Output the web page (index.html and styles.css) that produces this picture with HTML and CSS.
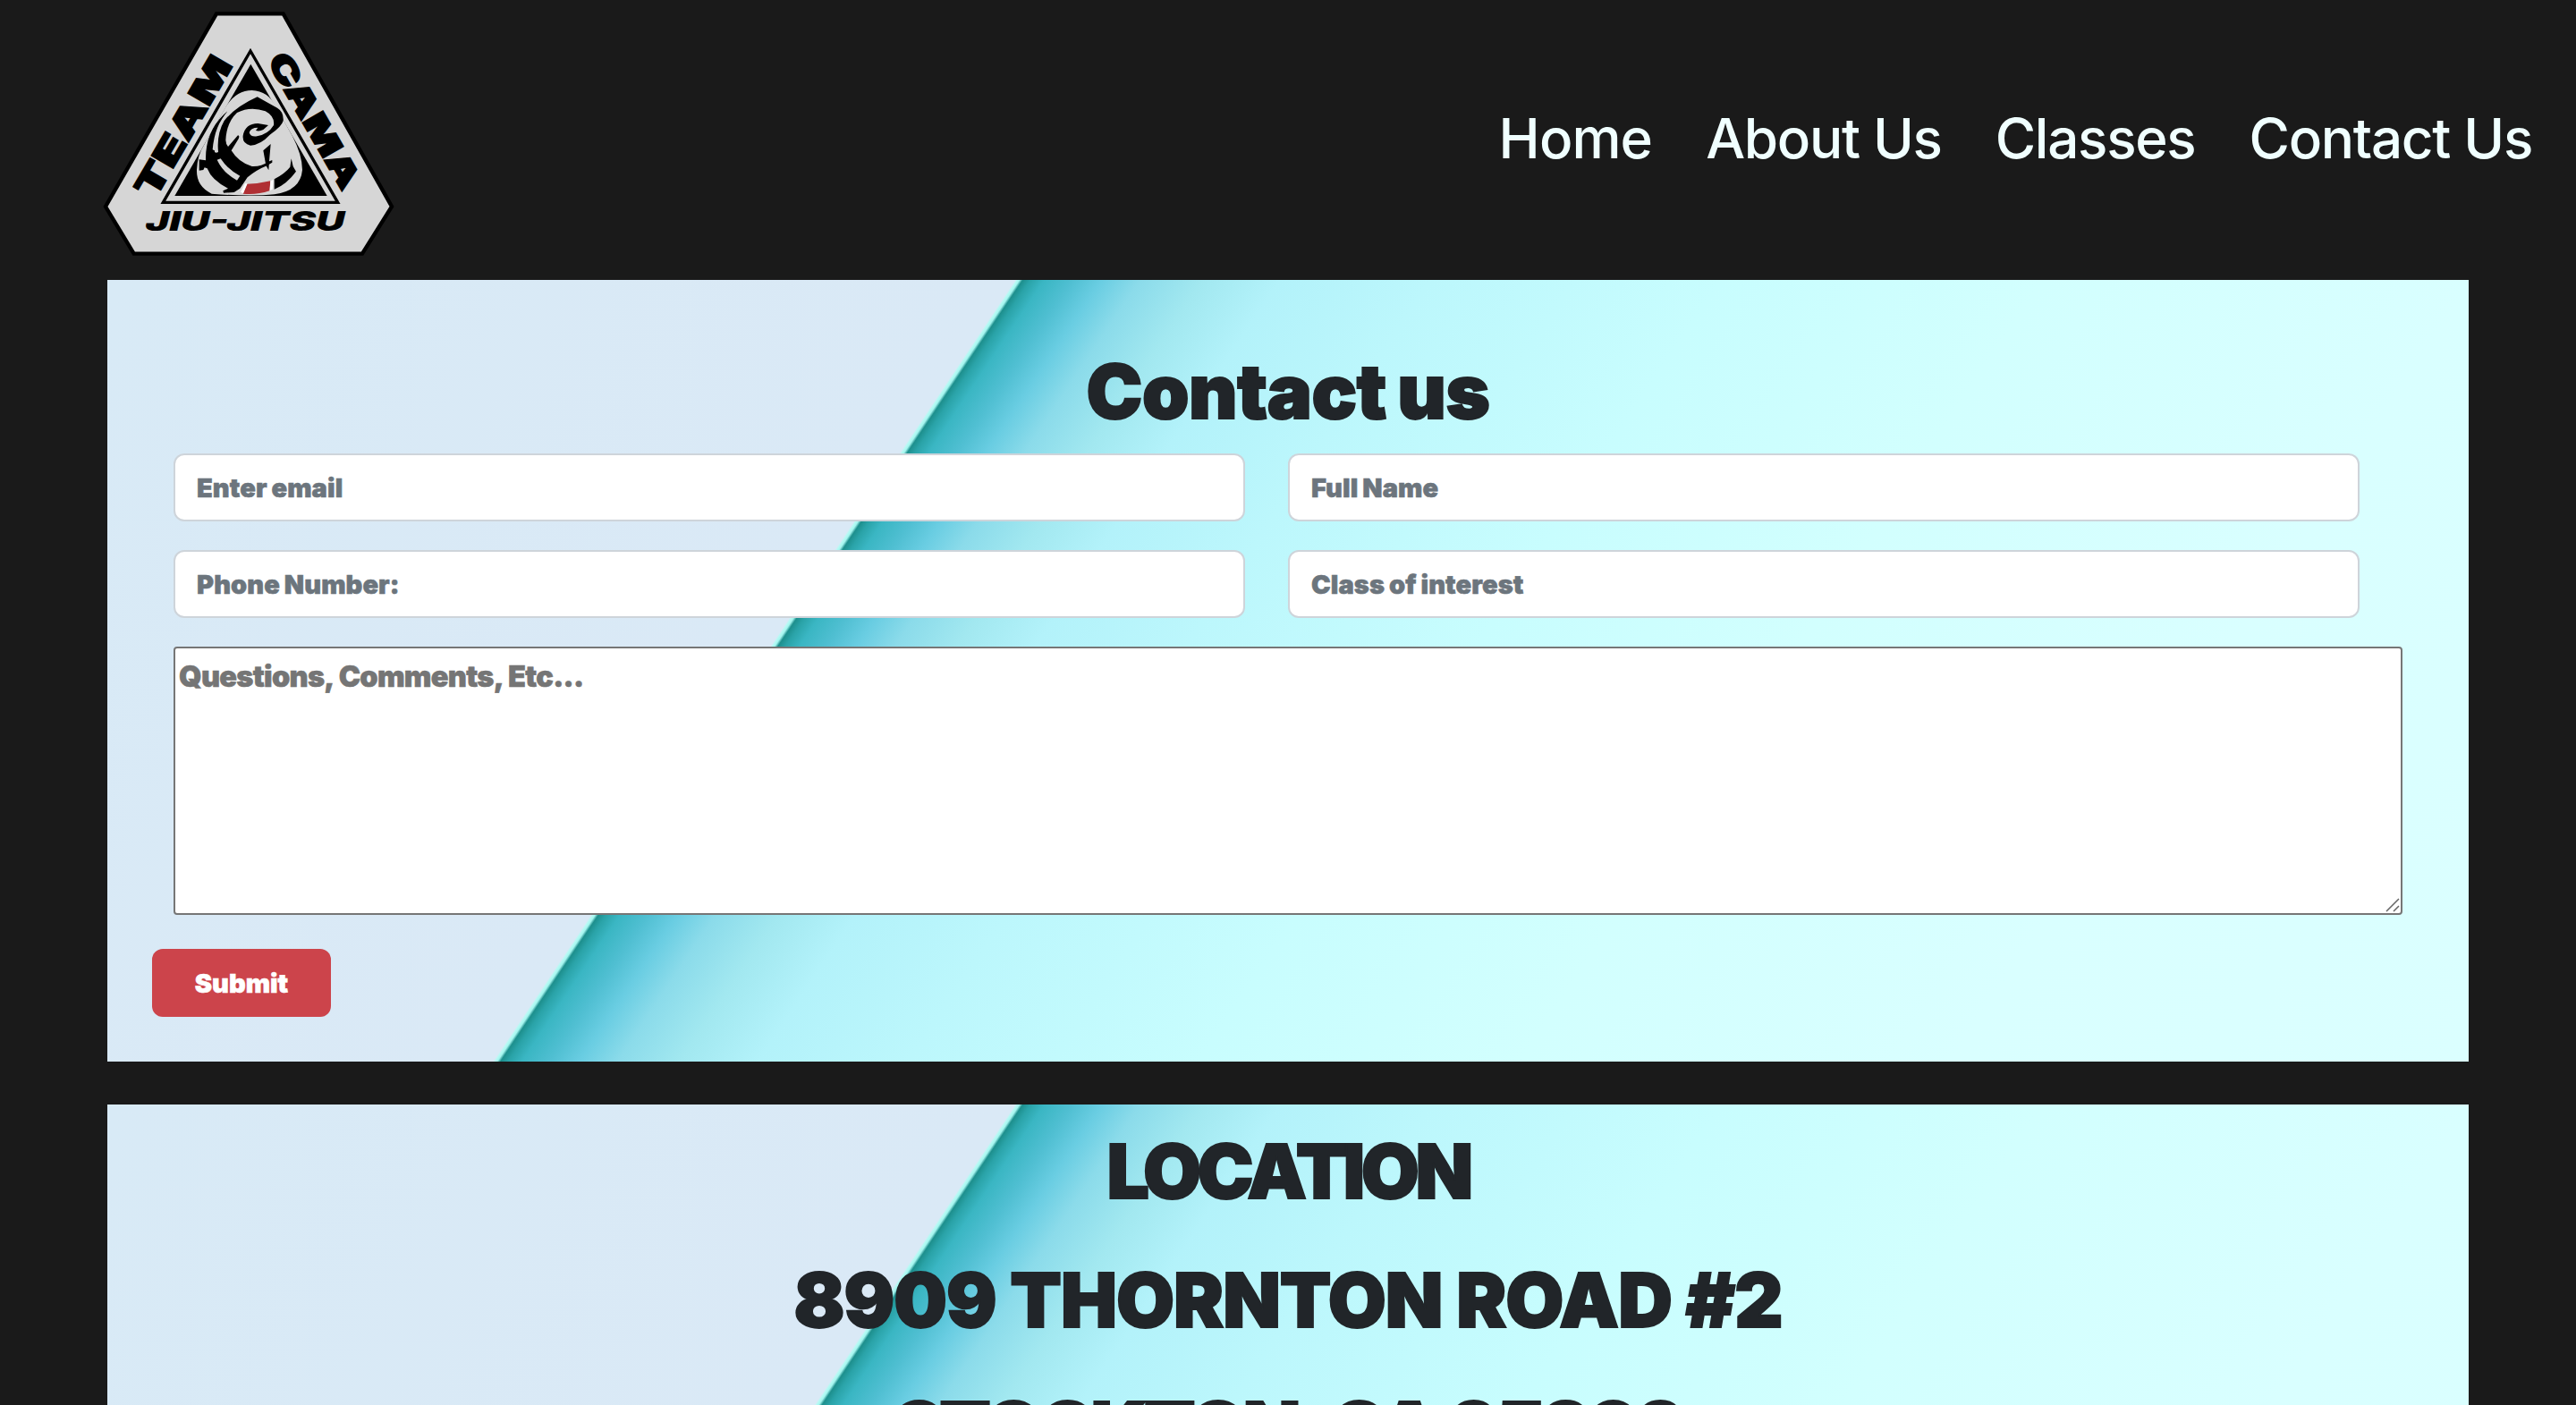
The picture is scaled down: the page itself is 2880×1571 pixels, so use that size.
FILE: index.html
```html
<!DOCTYPE html>
<html lang="en">
<head>
<meta charset="utf-8">
<title>Team Cama Jiu-Jitsu</title>
<link rel="stylesheet" href="styles.css">
</head>
<body>
<header class="site-header">
  <a class="logo" href="#">
    <svg viewBox="0 0 1080 930" role="img" aria-label="Team Cama Jiu-Jitsu">
      <path class="plate" d="M426 46H650L1014 693L915 851H149L54 693Z"/>
      <path class="frame" d="M540 171L833 679H247Z"/>
      <path d="M541 215L797 657H286Z"/>
      <path class="grey" d="M455 362Q490 303 545 303Q600 305 625 358L680 455Q714 520 714 570Q708 640 620 652Q540 660 410 650Q358 625 360 570Q362 520 385 485Z"/>
      <g transform="translate(300 270)">
        <path d="M152 135Q190 88 263 55L330 92Q352 105 350 135Q345 155 305 182Q275 215 240 218Q212 212 215 185Q222 145 265 144L300 150L283 165Q270 172 258 168L265 158Q240 158 236 175Q240 190 262 187Q300 180 318 150Q322 120 290 103Q240 85 195 108Q160 140 157 200Q158 215 165 222L198 184Q205 185 200 196L176 235Q200 275 245 288Q275 290 300 272L313 267V275L295 286Q260 300 230 325L205 362L185 375L150 377L148 370L165 362Q110 335 95 295L86 292L82 300L68 302L68 265L90 268Q88 175 150 115L163 103Q120 160 120 240Q125 245 132 240Q126 180 152 135Z"/>
        <path class="grey" d="M163 106Q120 150 113 232L122 236Q120 170 163 106ZM128 266L140 262Q165 300 205 320L195 335Q150 312 128 266Z"/>
        <path d="M283 235L308 213L303 270L301 301L292 285ZM320 331Q358 310 373 290L377 262L383 288L393 305Q362 348 320 365Z"/>
        <path class="belt" d="M228 347Q270 346 307 337L304 370Q260 385 215 380Z"/>
        <path class="belt-edge" d="M222 346H230L216 379L207 374ZM307 337L317 333L314 365L305 369Z"/>
      </g>
      <text class="arc" transform="translate(218 672) rotate(-59.7)" font-size="116" textLength="525" lengthAdjust="spacingAndGlyphs">TEAM</text>
      <text class="arc" transform="translate(594 203) rotate(60)" font-size="108" textLength="508" lengthAdjust="spacingAndGlyphs">CAMA</text>
      <text class="base" x="188" y="775" font-size="90" textLength="668" lengthAdjust="spacingAndGlyphs">JIU-JITSU</text>
    </svg>
  </a>
  <nav class="nav">
    <a class="nav-home" href="#">Home</a>
    <a href="#">About Us</a>
    <a href="#">Classes</a>
    <a href="#">Contact Us</a>
  </nav>
</header>
<main>
  <section class="panel contact">
    <h1>Contact us</h1>
    <form>
      <div class="fields">
        <input class="field" type="email" placeholder="Enter email">
        <input class="field" type="text" placeholder="Full Name">
        <input class="field" type="tel" placeholder="Phone Number:">
        <input class="field" type="text" placeholder="Class of interest">
      </div>
      <div class="message">
        <textarea placeholder="Questions, Comments, Etc..."></textarea>
        <svg class="grip" viewBox="0 0 16 16"><path d="M1 15L15 1M9 15L15 9"/></svg>
      </div>
      <button class="submit" type="button">Submit</button>
    </form>
  </section>
  <section class="panel location">
    <h1 class="tight">LOCATION</h1>
    <h1 class="street">8909 THORNTON ROAD #2</h1>
    <h1 class="tight">STOCKTON, CA 95209</h1>
  </section>
</main>
</body>
</html>
```
FILE: styles.css
```css
* { box-sizing: border-box; }

body {
  margin: 0;
  height: 1571px;
  overflow: hidden;
  background: #1a1a1a;
  color: #212529;
  font-family: Inter, "Liberation Sans", sans-serif;
}

.site-header {
  display: flex;
  align-items: center;
  justify-content: space-between;
  height: 309px;
  margin-bottom: 4px;
  padding: 0 49px 0 100px;
}

.logo { align-self: flex-start; }
.logo svg { display: block; width: 360px; height: 310px; }
.plate { fill: #d6d6d6; stroke: #000; stroke-width: 13; }
.frame { fill: none; stroke: #000; stroke-width: 10; }
.grey { fill: #d6d6d6; }
.belt { fill: #b03034; }
.belt-edge { fill: #fff; }
.arc { font-weight: 900; stroke: #000; stroke-width: 5; }
.base { font-weight: 900; font-style: italic; }

.nav { display: flex; gap: 60px; }
.nav a {
  color: azure;
  font-size: 62px;
  font-weight: 500;
  letter-spacing: -1.3px;
  text-decoration: none;
  white-space: nowrap;
}
.nav .nav-home { letter-spacing: -0.9px; }

.panel {
  width: 2640px;
  margin: 0 auto 48px;
  background: linear-gradient(123.75deg,
    #d8eaf6 0, #dae9f6 844px, #b4fbf4 846px, #a4f4ee 848px,
    #1d8f8d 851px, #2aa3a8 858px, #3ab6c3 871px, #50bfd2 897px,
    #69cde2 924px, #8bdbea 960px, #a2e8f0 1018px, #b3f2fa 1090px,
    #bcf7fc 1230px, #c8fdfe 1500px, #d2fffe 1800px, #d9ffff 2200px,
    #dbffff 2681px);
}

h1 {
  margin: 0;
  font-size: 84px;
  font-weight: 900;
  line-height: 115px;
  text-align: center;
  letter-spacing: -0.4px;
  word-spacing: -4px;
  -webkit-text-stroke: 2px currentColor;
}
.street { letter-spacing: -1px; word-spacing: 0; }
.tight { letter-spacing: -4.5px; word-spacing: 3px; }

.contact { height: 874px; padding: 67px 50px 0; }

.fields {
  display: grid;
  grid-template-columns: 1198px 1198px;
  gap: 32px 48px;
  margin: 12px 24px 32px;
}

.field {
  height: 76px;
  padding: 0 24px;
  border: 2px solid #ced4da;
  border-radius: 12px;
  background: #fff;
  font: 900 29px Inter, sans-serif;
  letter-spacing: 0.1px;
  word-spacing: -1px;
  -webkit-text-stroke: 0.6px #6c757d;
}
.field::placeholder { color: #6c757d; opacity: 1; }

.message { position: relative; height: 300px; margin: 0 24px 38px; }
.message textarea {
  display: block;
  width: 100%;
  height: 100%;
  padding: 5px 4px;
  border: 2px solid #767676;
  border-radius: 4px;
  background: #fff;
  font: 900 32.5px/54px Inter, sans-serif;
  letter-spacing: -0.7px;
  word-spacing: 1px;
  resize: none;
  -webkit-text-stroke: 0.6px #757575;
}
.message textarea::placeholder { color: #757575; }
.grip {
  position: absolute;
  right: 3px;
  bottom: 3px;
  width: 16px;
  height: 16px;
  fill: none;
  stroke: #666;
  stroke-width: 1.5;
}

.submit {
  display: block;
  width: 200px;
  height: 76px;
  padding: 0;
  border: 0;
  border-radius: 12px;
  background: #cc444b;
  color: #fff;
  font: 900 29px Inter, sans-serif;
  -webkit-text-stroke: 0.6px #fff;
}

.location { padding-top: 17px; }
.location h1 { margin-bottom: 29px; }
.location h1:last-child { margin-bottom: 0; }
```
